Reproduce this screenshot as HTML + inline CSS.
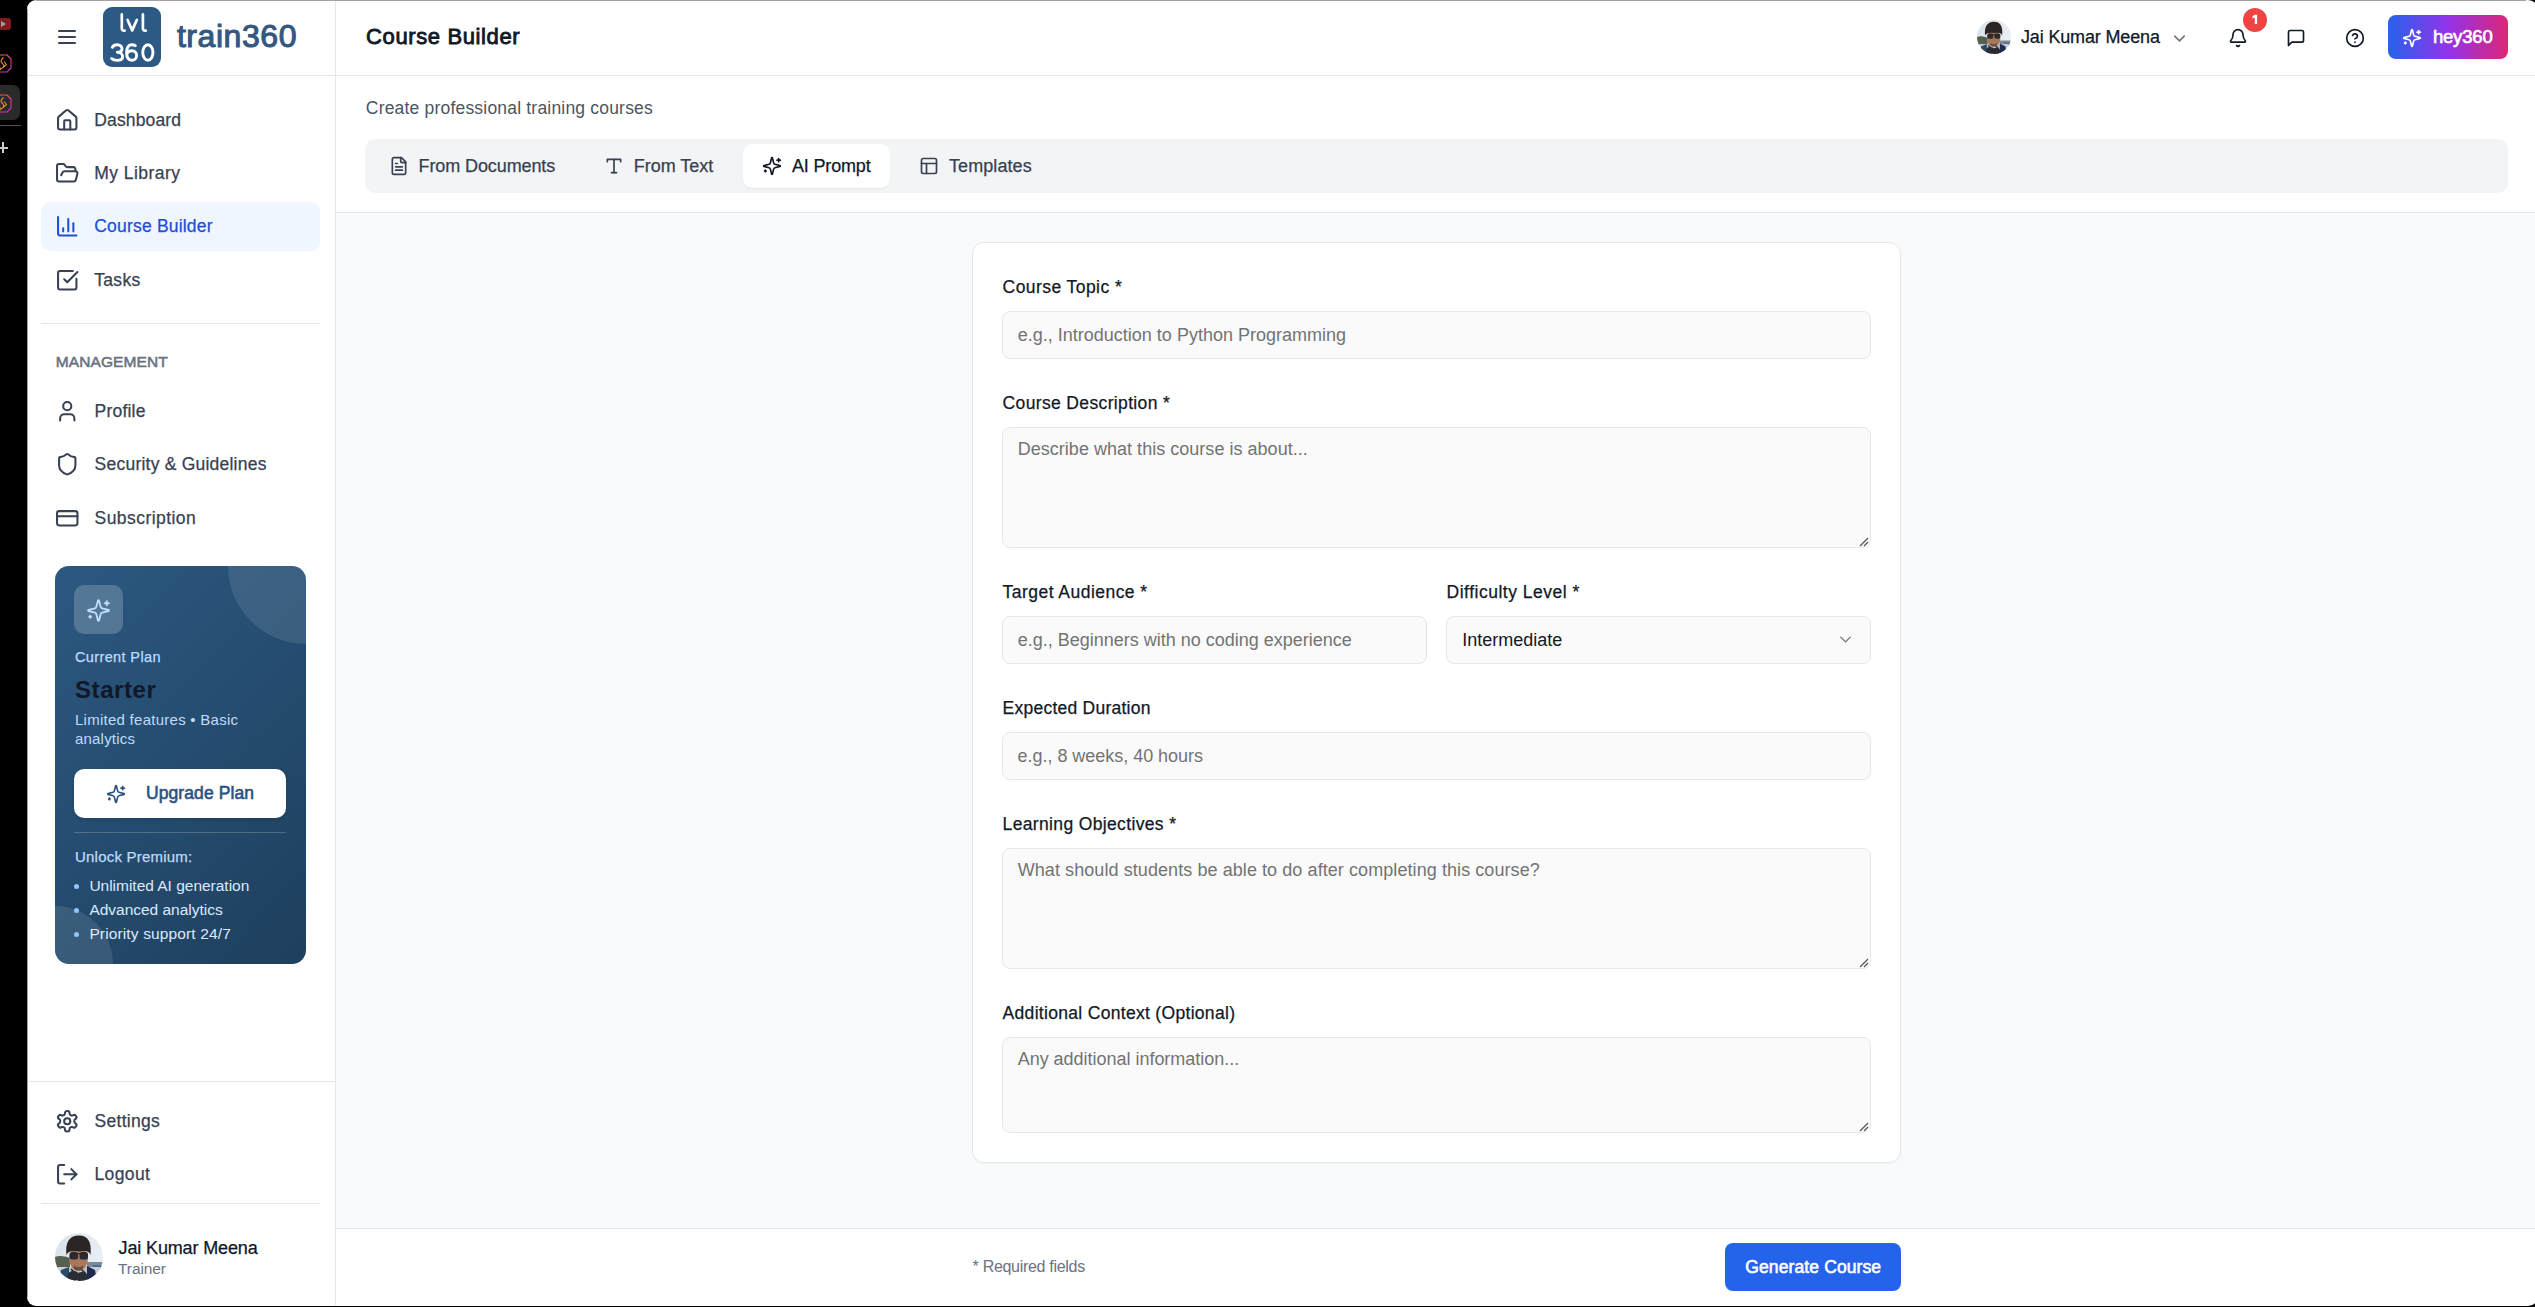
<!DOCTYPE html>
<html><head><meta charset="utf-8">
<style>
html,body{margin:0;padding:0}
body{width:2535px;height:1307px;position:relative;overflow:hidden;background:#000;font-family:"Liberation Sans",sans-serif}
.a{position:absolute;box-sizing:border-box}
.t{position:absolute;white-space:nowrap;font-family:"Liberation Sans",sans-serif}
.ic{position:absolute;fill:none;stroke-linecap:round;stroke-linejoin:round;overflow:visible}
.inp{position:absolute;box-sizing:border-box;background:#fafafa;border:1px solid #e5e7eb;border-radius:8px}
</style></head><body>
<!-- window background -->
<div class="a" style="left:27px;top:0;width:2508px;height:1306px;background:#fff"></div>
<!-- content gray area -->
<div class="a" style="left:336px;top:213px;width:2199px;height:1015px;background:#f9fafb"></div>
<!-- header bottom border -->
<div class="a" style="left:27px;top:75px;width:2508px;height:1px;background:#e5e7eb"></div>
<!-- sidebar right border -->
<div class="a" style="left:335px;top:0;width:1px;height:1306px;background:#e5e7eb"></div>
<!-- subheader bottom border -->
<div class="a" style="left:336px;top:212px;width:2199px;height:1px;background:#e5e7eb"></div>
<!-- footer top border -->
<div class="a" style="left:336px;top:1228px;width:2199px;height:1px;background:#e5e7eb"></div>

<!-- ===== SIDEBAR ===== -->
<svg class="ic" style="left:55px;top:25px;width:24px;height:24px" viewBox="0 0 24 24" stroke="#374151" stroke-width="2"><path d="M4 6h16M4 12h16M4 18h16"/></svg>
<div class="a" style="left:103px;top:7px;width:58px;height:60px;background:#2c5a85;border-radius:9px"></div>
<svg class="a" style="left:0;top:0;width:170px;height:75px" viewBox="0 0 170 75" fill="none" stroke="#fff" stroke-linecap="round" stroke-linejoin="round">
<g stroke-width="2.7"><path d="M121.8 14.4V28.2C121.8 30.2 122.8 30.9 124.6 30.6"/><path d="M127.6 20L132.2 30.4L136.8 20"/><path d="M142.9 14.4V28.2C142.9 30.2 143.9 30.9 145.7 30.6"/></g>
<g stroke-width="2.9"><path d="M112.4 47.2C113.3 45.5 115 44.7 117 44.7C120.1 44.7 122 46.5 122 48.7C122 50.9 120.2 52.3 117.4 52.3C120.6 52.3 122.6 54.2 122.6 56.8C122.6 59.3 120.4 60.4 117.2 60.4C115 60.4 113 59.9 111.6 58.5"/>
<path d="M135.3 45.6C134.3 44.9 133 44.7 131.5 44.7C128.2 44.7 126.6 48 126.6 52.6C126.6 57.8 128.4 60.3 131.7 60.3C134.6 60.3 136.6 58.4 136.6 55.5C136.6 52.7 134.7 50.8 131.9 50.8C129.6 50.8 127.5 52 126.8 54"/>
<ellipse cx="147.85" cy="52.5" rx="5.1" ry="7.8"/></g></svg>


<div class="a" style="left:41px;top:202px;width:279px;height:49px;background:#eff6ff;border-radius:9px"></div>
<div class="a" style="left:41px;top:323px;width:279px;height:1px;background:#e5e7eb"></div>
<div class="a" style="left:27px;top:1081px;width:308px;height:1px;background:#e5e7eb"></div>
<div class="a" style="left:41px;top:1203px;width:279px;height:1px;background:#e5e7eb"></div>

<!-- nav icons -->
<svg class="ic" style="left:54.75px;top:107.75px;width:24.5px;height:24.5px" viewBox="0 0 24 24" stroke="#374151" stroke-width="2"><path d="M15 21v-8a1 1 0 0 0-1-1h-4a1 1 0 0 0-1 1v8"/><path d="M3 10a2 2 0 0 1 .709-1.528l7-5.999a2 2 0 0 1 2.582 0l7 5.999A2 2 0 0 1 21 10v9a2 2 0 0 1-2 2H5a2 2 0 0 1-2-2z"/></svg>
<svg class="ic" style="left:54.75px;top:160.75px;width:24.5px;height:24.5px" viewBox="0 0 24 24" stroke="#374151" stroke-width="2"><path d="m6 14 1.5-2.9A2 2 0 0 1 9.24 10H20a2 2 0 0 1 1.94 2.5l-1.54 6a2 2 0 0 1-1.95 1.5H4a2 2 0 0 1-2-2V5a2 2 0 0 1 2-2h3.9a2 2 0 0 1 1.69.9l.81 1.2a2 2 0 0 0 1.67.9H18a2 2 0 0 1 2 2v2"/></svg>
<svg class="ic" style="left:54.75px;top:213.75px;width:24.5px;height:24.5px" viewBox="0 0 24 24" stroke="#1d4ed8" stroke-width="2"><path d="M3 3v16a2 2 0 0 0 2 2h16"/><path d="M18 17V9"/><path d="M13 17V5"/><path d="M8 17v-3"/></svg>
<svg class="ic" style="left:54.75px;top:267.75px;width:24.5px;height:24.5px" viewBox="0 0 24 24" stroke="#374151" stroke-width="2"><path d="M21 10.5V19a2 2 0 0 1-2 2H5a2 2 0 0 1-2-2V5a2 2 0 0 1 2-2h12.5"/><path d="m9 11 3 3L22 4"/></svg>
<svg class="ic" style="left:54.75px;top:398.75px;width:24.5px;height:24.5px" viewBox="0 0 24 24" stroke="#374151" stroke-width="2"><path d="M19 21v-2a4 4 0 0 0-4-4H9a4 4 0 0 0-4 4v2"/><circle cx="12" cy="7" r="4"/></svg>
<svg class="ic" style="left:54.75px;top:451.75px;width:24.5px;height:24.5px" viewBox="0 0 24 24" stroke="#374151" stroke-width="2"><path d="M20 13c0 5-3.500 7.500-7.660 8.950a1 1 0 0 1-.670-.010C7.500 20.500 4 18 4 13V6a1 1 0 0 1 1-1c2 0 4.500-1.200 6.240-2.720a1.170 1.170 0 0 1 1.520 0C14.510 3.810 17 5 19 5a1 1 0 0 1 1 1z"/></svg>
<svg class="ic" style="left:54.75px;top:505.75px;width:24.5px;height:24.5px" viewBox="0 0 24 24" stroke="#374151" stroke-width="2"><rect width="20" height="14" x="2" y="5" rx="2"/><path d="M2 10h20"/></svg>
<svg class="ic" style="left:54.75px;top:1108.75px;width:24.5px;height:24.5px" viewBox="0 0 24 24" stroke="#374151" stroke-width="2"><path d="M12.22 2h-.44a2 2 0 0 0-2 2v.18a2 2 0 0 1-1 1.73l-.43.25a2 2 0 0 1-2 0l-.15-.08a2 2 0 0 0-2.73.73l-.22.38a2 2 0 0 0 .73 2.730l.15.1a2 2 0 0 1 1 1.72v.51a2 2 0 0 1-1 1.740l-.15.09a2 2 0 0 0-.73 2.730l.22.38a2 2 0 0 0 2.730.73l.15-.08a2 2 0 0 1 2 0l.43.25a2 2 0 0 1 1 1.73V20a2 2 0 0 0 2 2h.44a2 2 0 0 0 2-2v-.18a2 2 0 0 1 1-1.73l.43-.25a2 2 0 0 1 2 0l.15.08a2 2 0 0 0 2.730-.73l.22-.39a2 2 0 0 0-.73-2.730l-.15-.08a2 2 0 0 1-1-1.740v-.5a2 2 0 0 1 1-1.740l.15-.09a2 2 0 0 0 .73-2.730l-.22-.38a2 2 0 0 0-2.730-.73l-.15.08a2 2 0 0 1-2 0l-.43-.25a2 2 0 0 1-1-1.73V4a2 2 0 0 0-2-2z"/><circle cx="12" cy="12" r="3"/></svg>
<svg class="ic" style="left:54.75px;top:1161.75px;width:24.5px;height:24.5px" viewBox="0 0 24 24" stroke="#374151" stroke-width="2"><path d="m16 17 5-5-5-5"/><path d="M21 12H9"/><path d="M9 21H5a2 2 0 0 1-2-2V5a2 2 0 0 1 2-2h4"/></svg>

<!-- plan card -->
<div class="a" style="left:55px;top:566px;width:251px;height:398px;border-radius:14px;overflow:hidden;background:linear-gradient(135deg,#2c5880 0%,#244b6e 55%,#1f3f5d 100%)">
  <div class="a" style="left:173px;top:-78px;width:156px;height:156px;border-radius:50%;background:rgba(255,255,255,0.1)"></div>
  <div class="a" style="left:-58px;top:340px;width:116px;height:116px;border-radius:50%;background:rgba(255,255,255,0.1)"></div>
  <div class="a" style="left:19px;top:19px;width:49px;height:49px;border-radius:10px;background:rgba(255,255,255,0.2)"></div>
  <div class="a" style="left:19px;top:203px;width:212px;height:49px;border-radius:10px;background:#fff;box-shadow:0 2px 4px rgba(0,0,0,0.12)"></div>
  <div class="a" style="left:19px;top:266px;width:212px;height:1px;background:rgba(255,255,255,0.2)"></div>
  <div class="a" style="left:19px;top:317.5px;width:5px;height:5px;border-radius:50%;background:#93c5fd"></div>
  <div class="a" style="left:19px;top:341.5px;width:5px;height:5px;border-radius:50%;background:#93c5fd"></div>
  <div class="a" style="left:19px;top:365.5px;width:5px;height:5px;border-radius:50%;background:#93c5fd"></div>
</div>
<svg class="ic" style="left:85.5px;top:597.5px;width:25px;height:25px" viewBox="0 0 24 24" stroke="#bfdbfe" stroke-width="1.8"><path d="M9.937 15.5A2 2 0 0 0 8.5 14.063l-6.135-1.582a.5.5 0 0 1 0-.962L8.5 9.936A2 2 0 0 0 9.937 8.5l1.582-6.135a.5.5 0 0 1 .963 0L14.063 8.5A2 2 0 0 0 15.5 9.937l6.135 1.581a.5.5 0 0 1 0 .964L15.5 14.063a2 2 0 0 0-1.437 1.437l-1.582 6.135a.5.5 0 0 1-.963 0z"/><path d="M20 3v4"/><path d="M22 5h-4"/><path d="M4 17v2"/><path d="M5 18H3"/></svg>
<svg class="ic" style="left:105.8px;top:783.5px;width:20px;height:20px" viewBox="0 0 24 24" stroke="#2c5282" stroke-width="2"><path d="M9.937 15.5A2 2 0 0 0 8.5 14.063l-6.135-1.582a.5.5 0 0 1 0-.962L8.5 9.936A2 2 0 0 0 9.937 8.5l1.582-6.135a.5.5 0 0 1 .963 0L14.063 8.5A2 2 0 0 0 15.5 9.937l6.135 1.581a.5.5 0 0 1 0 .964L15.5 14.063a2 2 0 0 0-1.437 1.437l-1.582 6.135a.5.5 0 0 1-.963 0z"/><path d="M20 3v4"/><path d="M22 5h-4"/><path d="M4 17v2"/><path d="M5 18H3"/></svg>

<!-- sidebar user avatar -->
<svg class="a" style="left:55px;top:1233px;width:48px;height:48px" viewBox="0 0 48 48"><defs><clipPath id="cav1"><circle cx="24" cy="24" r="24"/></clipPath>
  <linearGradient id="sky1" x1="0" y1="0" x2="1" y2="0.3"><stop offset="0" stop-color="#d9e2ea"/><stop offset="1" stop-color="#e9eef2"/></linearGradient></defs>
  <g clip-path="url(#cav1)">
    <rect width="48" height="48" fill="url(#sky1)"/>
    <path d="M0 24 C4 22 10 23 15 25 L15 35 L0 35 Z" fill="#55604f"/>
    <rect x="32" y="29" width="16" height="8" fill="#7e8890"/>
    <rect x="38" y="32" width="9" height="4" fill="#3f6f9a"/>
    <rect x="0" y="34" width="48" height="14" fill="#c9ced6"/>
    <path d="M3 48 L6 37 L14 34 L14 48 Z" fill="#2c4b68"/>
    <path d="M32 33 L40 37 L42 48 L32 48 Z" fill="#1f2a4d"/>
    <path d="M14 34 L32 33 L32 48 L14 48 Z" fill="#b9bfc9"/>
    <path d="M16 36 L20 40 L16 44 M26 36 L30 40 L26 44" stroke="#1d2230" stroke-width="1.5" fill="none"/>
    <ellipse cx="18.5" cy="43" rx="6" ry="5" fill="#2a2c34"/>
    <ellipse cx="27" cy="44" rx="6" ry="5" fill="#2a2c34"/>
    <ellipse cx="23.5" cy="26" rx="9.5" ry="11.5" fill="#a9785b"/>
    <path d="M19 32 C21 35 26 35 28 32 L28 36 C25 38 21 38 19 36 Z" fill="#6e4c3c"/>
    <path d="M11.5 22 C10 10 14 2.5 24 2.5 C33 2.5 37 9 35.5 22 C34 18 31 17.5 24 18.5 C17 17.5 13.5 18 11.5 22 Z" fill="#2b2623"/>
    <rect x="14.5" y="19" width="8.5" height="7.5" rx="2.5" fill="#2b2a30"/>
    <rect x="24.5" y="19" width="8.5" height="7.5" rx="2.5" fill="#2b2a30"/>
    <rect x="22" y="20" width="3" height="1.2" fill="#2b2a30"/>
  </g></svg>

<!-- ===== HEADER (content) ===== -->
<svg class="a" style="left:1977px;top:20px;width:34px;height:34px" viewBox="0 0 48 48"><defs><clipPath id="cav2"><circle cx="24" cy="24" r="24"/></clipPath>
  <linearGradient id="sky2" x1="0" y1="0" x2="1" y2="0.3"><stop offset="0" stop-color="#d9e2ea"/><stop offset="1" stop-color="#e9eef2"/></linearGradient></defs>
  <g clip-path="url(#cav2)">
    <rect width="48" height="48" fill="url(#sky2)"/>
    <path d="M0 24 C4 22 10 23 15 25 L15 35 L0 35 Z" fill="#55604f"/>
    <rect x="32" y="29" width="16" height="8" fill="#7e8890"/>
    <rect x="38" y="32" width="9" height="4" fill="#3f6f9a"/>
    <rect x="0" y="34" width="48" height="14" fill="#c9ced6"/>
    <path d="M3 48 L6 37 L14 34 L14 48 Z" fill="#2c4b68"/>
    <path d="M32 33 L40 37 L42 48 L32 48 Z" fill="#1f2a4d"/>
    <path d="M14 34 L32 33 L32 48 L14 48 Z" fill="#b9bfc9"/>
    <path d="M16 36 L20 40 L16 44 M26 36 L30 40 L26 44" stroke="#1d2230" stroke-width="1.5" fill="none"/>
    <ellipse cx="18.5" cy="43" rx="6" ry="5" fill="#2a2c34"/>
    <ellipse cx="27" cy="44" rx="6" ry="5" fill="#2a2c34"/>
    <ellipse cx="23.5" cy="26" rx="9.5" ry="11.5" fill="#a9785b"/>
    <path d="M19 32 C21 35 26 35 28 32 L28 36 C25 38 21 38 19 36 Z" fill="#6e4c3c"/>
    <path d="M11.5 22 C10 10 14 2.5 24 2.5 C33 2.5 37 9 35.5 22 C34 18 31 17.5 24 18.5 C17 17.5 13.5 18 11.5 22 Z" fill="#2b2623"/>
    <rect x="14.5" y="19" width="8.5" height="7.5" rx="2.5" fill="#2b2a30"/>
    <rect x="24.5" y="19" width="8.5" height="7.5" rx="2.5" fill="#2b2a30"/>
    <rect x="22" y="20" width="3" height="1.2" fill="#2b2a30"/>
  </g></svg>
<svg class="ic" style="left:2170px;top:28.5px;width:19px;height:19px" viewBox="0 0 24 24" stroke="#6b7280" stroke-width="2"><path d="m6 9 6 6 6-6"/></svg>
<svg class="ic" style="left:2228px;top:28px;width:20px;height:20px" viewBox="0 0 24 24" stroke="#111827" stroke-width="2"><path d="M10.268 21a2 2 0 0 0 3.464 0"/><path d="M3.262 15.326A1 1 0 0 0 4 17h16a1 1 0 0 0 .74-1.673C19.41 13.956 18 12.499 18 8A6 6 0 0 0 6 8c0 4.499-1.411 5.956-2.738 7.326"/></svg>
<div class="a" style="left:2243px;top:8px;width:24px;height:24px;border-radius:50%;background:#ef4444"></div>
<svg class="a" style="left:2238px;top:4px;width:34px;height:32px" viewBox="0 0 34 32"><path d="M16.8 10.8H19.1V20.1H16.8V13.5L14.6 14.5V12.3Z" fill="#fff"/></svg>
<svg class="ic" style="left:2286.3px;top:28.3px;width:20px;height:20px" viewBox="0 0 24 24" stroke="#111827" stroke-width="2"><path d="M21 15a2 2 0 0 1-2 2H7l-4 4V5a2 2 0 0 1 2-2h14a2 2 0 0 1 2 2z"/></svg>
<svg class="ic" style="left:2345px;top:28px;width:20px;height:20px" viewBox="0 0 24 24" stroke="#111827" stroke-width="2"><circle cx="12" cy="12" r="10"/><path d="M9.09 9a3 3 0 0 1 5.83 1c0 2-3 3-3 3"/><path d="M12 17h.01"/></svg>
<div class="a" style="left:2388px;top:15px;width:120px;height:44px;border-radius:8px;background:linear-gradient(90deg,#2563eb 0%,#9333ea 50%,#db2777 100%)"></div>
<svg class="ic" style="left:2402px;top:27.7px;width:20px;height:20px" viewBox="0 0 24 24" stroke="#fff" stroke-width="2"><path d="M9.937 15.5A2 2 0 0 0 8.5 14.063l-6.135-1.582a.5.5 0 0 1 0-.962L8.5 9.936A2 2 0 0 0 9.937 8.5l1.582-6.135a.5.5 0 0 1 .963 0L14.063 8.5A2 2 0 0 0 15.5 9.937l6.135 1.581a.5.5 0 0 1 0 .964L15.5 14.063a2 2 0 0 0-1.437 1.437l-1.582 6.135a.5.5 0 0 1-.963 0z"/><path d="M20 3v4"/><path d="M22 5h-4"/><path d="M4 17v2"/><path d="M5 18H3"/></svg>

<!-- ===== TABS ===== -->
<div class="a" style="left:365px;top:139px;width:2143px;height:54px;background:#f3f4f6;border-radius:10px"></div>
<div class="a" style="left:743px;top:144px;width:147px;height:44px;background:#fff;border-radius:9px;box-shadow:0 1px 2px rgba(0,0,0,0.06)"></div>
<svg class="ic" style="left:388.7px;top:156px;width:20px;height:20px" viewBox="0 0 24 24" stroke="#374151" stroke-width="2"><path d="M15 2H6a2 2 0 0 0-2 2v16a2 2 0 0 0 2 2h12a2 2 0 0 0 2-2V7Z"/><path d="M14 2v4a2 2 0 0 0 2 2h4"/><path d="M10 9H8"/><path d="M16 13H8"/><path d="M16 17H8"/></svg>
<svg class="ic" style="left:603.9px;top:156px;width:20px;height:20px" viewBox="0 0 24 24" stroke="#374151" stroke-width="2"><path d="M4 7V4h16v3"/><path d="M9 20h6"/><path d="M12 4v16"/></svg>
<svg class="ic" style="left:762px;top:155.5px;width:20px;height:20px" viewBox="0 0 24 24" stroke="#111827" stroke-width="2"><path d="M9.937 15.5A2 2 0 0 0 8.5 14.063l-6.135-1.582a.5.5 0 0 1 0-.962L8.5 9.936A2 2 0 0 0 9.937 8.5l1.582-6.135a.5.5 0 0 1 .963 0L14.063 8.5A2 2 0 0 0 15.5 9.937l6.135 1.581a.5.5 0 0 1 0 .964L15.5 14.063a2 2 0 0 0-1.437 1.437l-1.582 6.135a.5.5 0 0 1-.963 0z"/><path d="M20 3v4"/><path d="M22 5h-4"/><path d="M4 17v2"/><path d="M5 18H3"/></svg>
<svg class="ic" style="left:918.7px;top:155.6px;width:20px;height:20px" viewBox="0 0 24 24" stroke="#374151" stroke-width="2"><rect width="18" height="18" x="3" y="3" rx="2"/><path d="M3 9h18"/><path d="M9 21V9"/></svg>

<!-- ===== FORM CARD ===== -->
<div class="a" style="left:972px;top:242px;width:929px;height:921px;background:#fff;border:1px solid #e5e7eb;border-radius:12px;box-shadow:0 1px 2px rgba(0,0,0,0.03)"></div>
<div class="inp" style="left:1002px;top:311px;width:869px;height:48px"></div>
<div class="inp" style="left:1002px;top:427px;width:869px;height:121px"></div>
<div class="inp" style="left:1002px;top:616px;width:425px;height:48px"></div>
<div class="inp" style="left:1446px;top:616px;width:425px;height:48px"></div>
<div class="inp" style="left:1002px;top:732px;width:869px;height:48px"></div>
<div class="inp" style="left:1002px;top:848px;width:869px;height:121px"></div>
<div class="inp" style="left:1002px;top:1037px;width:869px;height:96px"></div>
<svg class="ic" style="left:1836.1px;top:629.9px;width:19px;height:19px" viewBox="0 0 24 24" stroke="#737373" stroke-width="1.7"><path d="m6 9 6 6 6-6"/></svg>
<!-- resize handles -->
<svg class="a" style="left:1859px;top:537px;width:10px;height:10px" viewBox="0 0 10 10" stroke="#555" stroke-width="1.2"><path d="M1 9L9 1M5 9L9 5"/></svg>
<svg class="a" style="left:1859px;top:958px;width:10px;height:10px" viewBox="0 0 10 10" stroke="#555" stroke-width="1.2"><path d="M1 9L9 1M5 9L9 5"/></svg>
<svg class="a" style="left:1859px;top:1122px;width:10px;height:10px" viewBox="0 0 10 10" stroke="#555" stroke-width="1.2"><path d="M1 9L9 1M5 9L9 5"/></svg>

<!-- footer button -->
<div class="a" style="left:1725px;top:1243px;width:176px;height:48px;background:#2563eb;border-radius:8px"></div>

<div class="t" id="train" style="left:176.90px;top:20px;font-size:32px;line-height:32px;font-weight:400;letter-spacing:0.560px;color:#34577f;-webkit-text-stroke:1.05px currentColor;">train360</div>
<div class="t" id="title" style="left:366.00px;top:26px;font-size:22px;line-height:22px;font-weight:400;letter-spacing:0.628px;color:#111827;-webkit-text-stroke:0.85px currentColor;">Course Builder</div>
<div class="t" id="hname" style="left:2021.00px;top:28px;font-size:18px;line-height:18px;font-weight:400;letter-spacing:-0.151px;color:#111827;-webkit-text-stroke:0.25px currentColor;">Jai Kumar Meena</div>
<div class="t" id="hey" style="left:2432.90px;top:28px;font-size:18.5px;line-height:18.5px;font-weight:400;letter-spacing:-0.176px;color:#fff;-webkit-text-stroke:0.65px currentColor;">hey360</div>
<div class="t" id="sub" style="left:365.80px;top:100px;font-size:17.5px;line-height:17.5px;font-weight:400;letter-spacing:0.195px;color:#4b5563;">Create professional training courses</div>
<div class="t" id="tab1" style="left:418.50px;top:157px;font-size:18px;line-height:18px;font-weight:400;letter-spacing:-0.097px;color:#374151;-webkit-text-stroke:0.25px currentColor;">From Documents</div>
<div class="t" id="tab2" style="left:633.80px;top:157px;font-size:18px;line-height:18px;font-weight:400;letter-spacing:-0.019px;color:#374151;-webkit-text-stroke:0.25px currentColor;">From Text</div>
<div class="t" id="tab3" style="left:791.90px;top:157px;font-size:18px;line-height:18px;font-weight:400;letter-spacing:-0.151px;color:#111827;-webkit-text-stroke:0.25px currentColor;">AI Prompt</div>
<div class="t" id="tab4" style="left:949.00px;top:157px;font-size:18px;line-height:18px;font-weight:400;letter-spacing:0.078px;color:#374151;-webkit-text-stroke:0.25px currentColor;">Templates</div>
<div class="t" id="nav1" style="left:94.30px;top:112px;font-size:17.5px;line-height:17.5px;font-weight:400;letter-spacing:0.141px;color:#374151;-webkit-text-stroke:0.25px currentColor;">Dashboard</div>
<div class="t" id="nav2" style="left:94.30px;top:165px;font-size:17.5px;line-height:17.5px;font-weight:400;letter-spacing:0.442px;color:#374151;-webkit-text-stroke:0.25px currentColor;">My Library</div>
<div class="t" id="nav3" style="left:94.30px;top:218px;font-size:17.5px;line-height:17.5px;font-weight:400;letter-spacing:0.188px;color:#1d4ed8;-webkit-text-stroke:0.25px currentColor;">Course Builder</div>
<div class="t" id="nav4" style="left:94.30px;top:272px;font-size:17.5px;line-height:17.5px;font-weight:400;letter-spacing:0.297px;color:#374151;-webkit-text-stroke:0.25px currentColor;">Tasks</div>
<div class="t" id="mgmt" style="left:55.80px;top:354px;font-size:15.5px;line-height:15.5px;font-weight:400;letter-spacing:0.082px;color:#6b7280;-webkit-text-stroke:0.55px currentColor;">MANAGEMENT</div>
<div class="t" id="nav5" style="left:94.60px;top:403px;font-size:17.5px;line-height:17.5px;font-weight:400;letter-spacing:0.198px;color:#374151;-webkit-text-stroke:0.25px currentColor;">Profile</div>
<div class="t" id="nav6" style="left:94.60px;top:456px;font-size:17.5px;line-height:17.5px;font-weight:400;letter-spacing:0.225px;color:#374151;-webkit-text-stroke:0.25px currentColor;">Security &amp; Guidelines</div>
<div class="t" id="nav7" style="left:94.60px;top:510px;font-size:17.5px;line-height:17.5px;font-weight:400;letter-spacing:0.433px;color:#374151;-webkit-text-stroke:0.25px currentColor;">Subscription</div>
<div class="t" id="cur" style="left:75.00px;top:650px;font-size:14.5px;line-height:14.5px;font-weight:400;letter-spacing:0.371px;color:#bfdbfe;-webkit-text-stroke:0.25px currentColor;">Current Plan</div>
<div class="t" id="starter" style="left:75.00px;top:678px;font-size:24px;line-height:24px;font-weight:700;letter-spacing:0.583px;color:#111827;">Starter</div>
<div class="t" id="lim1" style="left:75.00px;top:712px;font-size:15px;line-height:15px;font-weight:400;letter-spacing:0.262px;color:#bfdbfe;">Limited features • Basic</div>
<div class="t" id="lim2" style="left:75.00px;top:731px;font-size:15px;line-height:15px;font-weight:400;letter-spacing:0.194px;color:#bfdbfe;">analytics</div>
<div class="t" id="upg" style="left:145.90px;top:785px;font-size:17.5px;line-height:17.5px;font-weight:400;letter-spacing:0.108px;color:#2c5282;-webkit-text-stroke:0.6px currentColor;">Upgrade Plan</div>
<div class="t" id="unl" style="left:75.00px;top:849px;font-size:15px;line-height:15px;font-weight:400;letter-spacing:0.212px;color:#bfdbfe;-webkit-text-stroke:0.25px currentColor;">Unlock Premium:</div>
<div class="t" id="b1" style="left:89.40px;top:878px;font-size:15.5px;line-height:15.5px;font-weight:400;letter-spacing:-0.017px;color:#dbeafe;">Unlimited AI generation</div>
<div class="t" id="b2" style="left:89.40px;top:902px;font-size:15.5px;line-height:15.5px;font-weight:400;letter-spacing:-0.014px;color:#dbeafe;">Advanced analytics</div>
<div class="t" id="b3" style="left:89.40px;top:926px;font-size:15.5px;line-height:15.5px;font-weight:400;letter-spacing:0.134px;color:#dbeafe;">Priority support 24/7</div>
<div class="t" id="set" style="left:94.50px;top:1113px;font-size:17.5px;line-height:17.5px;font-weight:400;letter-spacing:0.291px;color:#374151;-webkit-text-stroke:0.25px currentColor;">Settings</div>
<div class="t" id="logout" style="left:94.50px;top:1166px;font-size:17.5px;line-height:17.5px;font-weight:400;letter-spacing:0.390px;color:#374151;-webkit-text-stroke:0.25px currentColor;">Logout</div>
<div class="t" id="sname" style="left:118.60px;top:1239px;font-size:18px;line-height:18px;font-weight:400;letter-spacing:-0.144px;color:#111827;-webkit-text-stroke:0.25px currentColor;">Jai Kumar Meena</div>
<div class="t" id="trainer" style="left:118.10px;top:1261px;font-size:15.5px;line-height:15.5px;font-weight:400;letter-spacing:-0.119px;color:#6b7280;">Trainer</div>
<div class="t" id="l1" style="left:1002.60px;top:279px;font-size:17.5px;line-height:17.5px;font-weight:400;letter-spacing:0.432px;color:#111827;-webkit-text-stroke:0.25px currentColor;">Course Topic *</div>
<div class="t" id="p1" style="left:1017.70px;top:326px;font-size:18px;line-height:18px;font-weight:400;letter-spacing:0.004px;color:#737373;">e.g., Introduction to Python Programming</div>
<div class="t" id="l2" style="left:1002.60px;top:395px;font-size:17.5px;line-height:17.5px;font-weight:400;letter-spacing:0.354px;color:#111827;-webkit-text-stroke:0.25px currentColor;">Course Description *</div>
<div class="t" id="p2" style="left:1017.70px;top:440px;font-size:18px;line-height:18px;font-weight:400;letter-spacing:0.026px;color:#737373;">Describe what this course is about...</div>
<div class="t" id="l3" style="left:1002.60px;top:584px;font-size:17.5px;line-height:17.5px;font-weight:400;letter-spacing:0.463px;color:#111827;-webkit-text-stroke:0.25px currentColor;">Target Audience *</div>
<div class="t" id="p3" style="left:1017.70px;top:631px;font-size:18px;line-height:18px;font-weight:400;letter-spacing:-0.006px;color:#737373;">e.g., Beginners with no coding experience</div>
<div class="t" id="l4" style="left:1446.60px;top:584px;font-size:17.5px;line-height:17.5px;font-weight:400;letter-spacing:0.502px;color:#111827;-webkit-text-stroke:0.25px currentColor;">Difficulty Level *</div>
<div class="t" id="sel" style="left:1462.20px;top:631px;font-size:18px;line-height:18px;font-weight:400;letter-spacing:0.002px;color:#111827;">Intermediate</div>
<div class="t" id="l5" style="left:1002.60px;top:700px;font-size:17.5px;line-height:17.5px;font-weight:400;letter-spacing:0.241px;color:#111827;-webkit-text-stroke:0.25px currentColor;">Expected Duration</div>
<div class="t" id="p5" style="left:1017.60px;top:747px;font-size:18px;line-height:18px;font-weight:400;letter-spacing:-0.033px;color:#737373;">e.g., 8 weeks, 40 hours</div>
<div class="t" id="l6" style="left:1002.60px;top:816px;font-size:17.5px;line-height:17.5px;font-weight:400;letter-spacing:0.353px;color:#111827;-webkit-text-stroke:0.25px currentColor;">Learning Objectives *</div>
<div class="t" id="p6" style="left:1017.70px;top:861px;font-size:18px;line-height:18px;font-weight:400;letter-spacing:0.076px;color:#737373;">What should students be able to do after completing this course?</div>
<div class="t" id="l7" style="left:1002.60px;top:1005px;font-size:17.5px;line-height:17.5px;font-weight:400;letter-spacing:0.309px;color:#111827;-webkit-text-stroke:0.25px currentColor;">Additional Context (Optional)</div>
<div class="t" id="p7" style="left:1017.70px;top:1050px;font-size:18px;line-height:18px;font-weight:400;letter-spacing:-0.022px;color:#737373;">Any additional information...</div>
<div class="t" id="req" style="left:972.60px;top:1259px;font-size:16px;line-height:16px;font-weight:400;letter-spacing:-0.302px;color:#6b7280;">* Required fields</div>
<div class="t" id="gen" style="left:1745.30px;top:1259px;font-size:17.5px;line-height:17.5px;font-weight:400;letter-spacing:0.112px;color:#fff;-webkit-text-stroke:0.6px currentColor;">Generate Course</div>

<!-- window frame overlay -->
<div class="a" style="left:27px;top:0;width:2511px;height:1306px;border-radius:9px 10px 10px 9px;box-shadow:0 0 0 60px #000;pointer-events:none"></div>
<div class="a" style="left:36px;top:0;width:2490px;height:1px;background:#a3a3a3"></div>
<div class="a" style="left:27px;top:9px;width:1px;height:1288px;background:#a3a3a3"></div>

<!-- left strip -->
<div class="a" style="left:-8px;top:18px;width:19px;height:12px;border-radius:3px;background:#7f1d1d"></div>
<div class="a" style="left:1px;top:21px;width:0;height:0;border-left:5px solid #9ca3af;border-top:3px solid transparent;border-bottom:3px solid transparent"></div>
<div class="a" style="left:-8px;top:85px;width:28px;height:35px;border-radius:7px;background:#2a2a2a"></div>
<svg class="a" style="left:-8px;top:54px;width:20px;height:19px" viewBox="0 0 20 19"><defs><linearGradient id="sg1" x1="0" y1="0" x2="1" y2="1"><stop offset="0" stop-color="#f97316"/><stop offset="0.6" stop-color="#e0457b"/><stop offset="1" stop-color="#c026d3"/></linearGradient></defs><path d="M5 1H15L19 5V14L15 18H5L1 14V5Z" fill="none" stroke="url(#sg1)" stroke-width="1.1" stroke-linejoin="round"/><path d="M11.5 3.5C10 5 8 6 9.5 8.5C11 10 13 11 11 13.5L7.5 16C9 13 7 12 6.5 10M12 7.5L14.5 10.5L11 13.5" fill="none" stroke="#f28a2e" stroke-width="1.1" stroke-linejoin="round"/></svg>
<svg class="a" style="left:-8px;top:94px;width:20px;height:19px" viewBox="0 0 20 19"><defs><linearGradient id="sg2" x1="0" y1="0" x2="1" y2="1"><stop offset="0" stop-color="#f97316"/><stop offset="0.6" stop-color="#e0457b"/><stop offset="1" stop-color="#c026d3"/></linearGradient></defs><path d="M5 1H15L19 5V14L15 18H5L1 14V5Z" fill="none" stroke="url(#sg2)" stroke-width="1.1" stroke-linejoin="round"/><path d="M11.5 3.5C10 5 8 6 9.5 8.5C11 10 13 11 11 13.5L7.5 16C9 13 7 12 6.5 10M12 7.5L14.5 10.5L11 13.5" fill="none" stroke="#f28a2e" stroke-width="1.1" stroke-linejoin="round"/></svg>
<div class="a" style="left:0;top:125px;width:21px;height:1px;background:#555"></div>
<div class="a" style="left:0;top:147px;width:8px;height:1.5px;background:#ccc"></div>
<div class="a" style="left:2px;top:142px;width:1.5px;height:11px;background:#ccc"></div>
</body></html>
